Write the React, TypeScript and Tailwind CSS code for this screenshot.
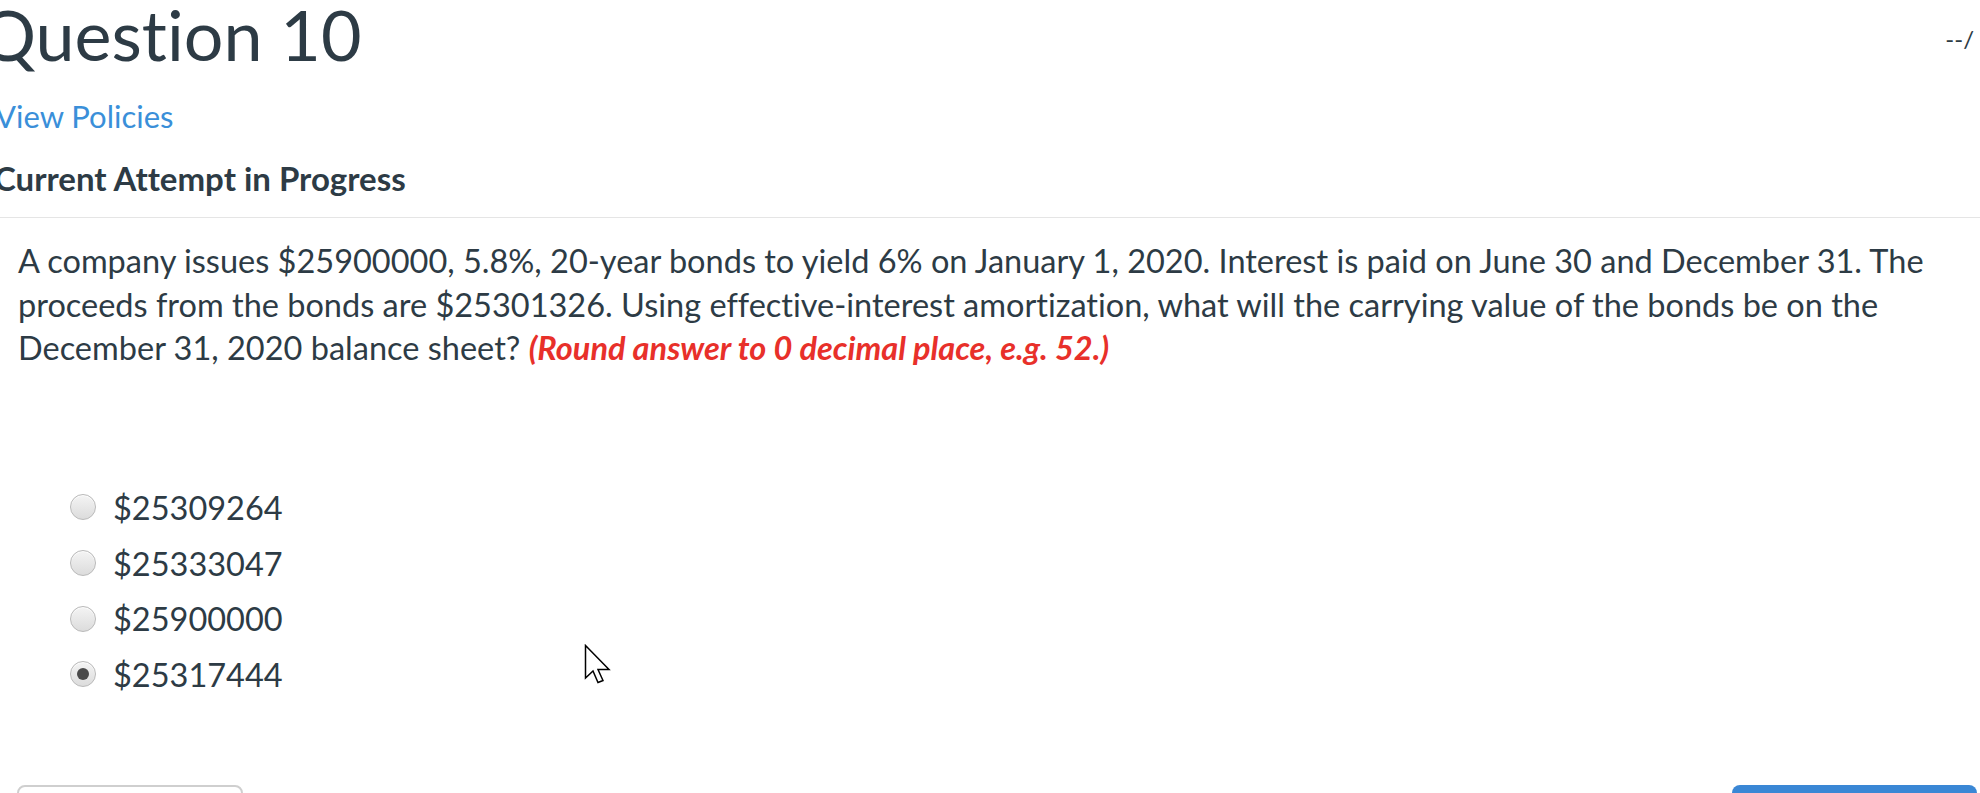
import React from 'react';

const options = [
    { label: '$25309264', checked: false },
    { label: '$25333047', checked: false },
    { label: '$25900000', checked: false },
    { label: '$25317444', checked: true },
];

// fake native radio look
const Radio = ({ checked }: { checked: boolean }) => (
    <span className="flex h-[26px] w-[26px] shrink-0 items-center justify-center rounded-full border border-[#b9b9b9] bg-gradient-to-b from-[#f4f4f4] to-[#dcdcdc] shadow-[inset_0_1px_1px_rgba(255,255,255,0.9)]">
        {checked && <span className="h-[12px] w-[12px] rounded-full bg-[#4a4a4a]" />}
    </span>
);

export default function App() {
    return (
        <div
            className="relative h-[793px] w-full overflow-hidden bg-white text-[#2d3b45] [font-variant-ligatures:none]"
            style={{ fontFamily: 'Lato, "Noto Sans", sans-serif' }}
        >
            {/* header */}
            <div className="flex items-start justify-between">
                <h1 className="ml-[-20px] mt-[-2px] text-[70px] font-normal leading-[72px]">Question 10</h1>
                <span className="mr-[6px] mt-[24px] whitespace-nowrap text-[24px] leading-[30px]">--/</span>
            </div>

            <div className="mt-[26px] ml-[-5px] text-[31px] leading-[40px] text-[#3a8fd9]">View Policies</div>

            <div className="mt-[22px] ml-[-6px] border-b border-[#e5e5e5] pb-[19px] text-[33px] font-bold leading-[40px]">
                Current Attempt in Progress
            </div>

            {/* question body */}
            <div className="pl-[18px] pr-[40px] pt-[21px]">
                <p className="text-[32.5px] leading-[43.5px]">
                    A company issues $25900000, 5.8%, 20-year bonds to yield 6% on January 1, 2020. Interest is paid on June 30 and December 31. The proceeds from the bonds are $25301326. Using effective-interest amortization, what will the carrying value of the bonds be on the December 31, 2020 balance sheet?{' '}
                    <span className="font-bold italic text-[#e8302a]">(Round answer to 0 decimal place, e.g. 52.)</span>
                </p>

                <div className="mt-[110px] flex flex-col pl-[52px]">
                    {options.map((o) => (
                        <label key={o.label} className="flex h-[55.7px] items-center gap-[17px] text-[32.5px]">
                            <Radio checked={o.checked} />
                            <span className="mt-[2px]">{o.label}</span>
                        </label>
                    ))}
                </div>
            </div>

            {/* bottom buttons, mostly cut off */}
            <div className="absolute left-0 right-0 top-[785px] flex justify-between px-[3px]">
                <div className="ml-[14px] h-[50px] w-[226px] rounded-[8px] border-2 border-[#cfcfcf] bg-white" />
                <div className="h-[50px] w-[245px] rounded-[8px] bg-[#3a87d5]" />
            </div>

            {/* mouse pointer */}
            <svg className="absolute left-[584px] top-[644px]" width="28" height="42" viewBox="0 0 28 42">
                <path
                    d="M1.5 1.5 L1.5 34 L9 27 L14 38.5 L19 36.5 L14 25.5 L25 25.5 Z"
                    fill="white"
                    stroke="black"
                    strokeWidth="1.5"
                    strokeLinejoin="miter"
                />
            </svg>
        </div>
    );
}
